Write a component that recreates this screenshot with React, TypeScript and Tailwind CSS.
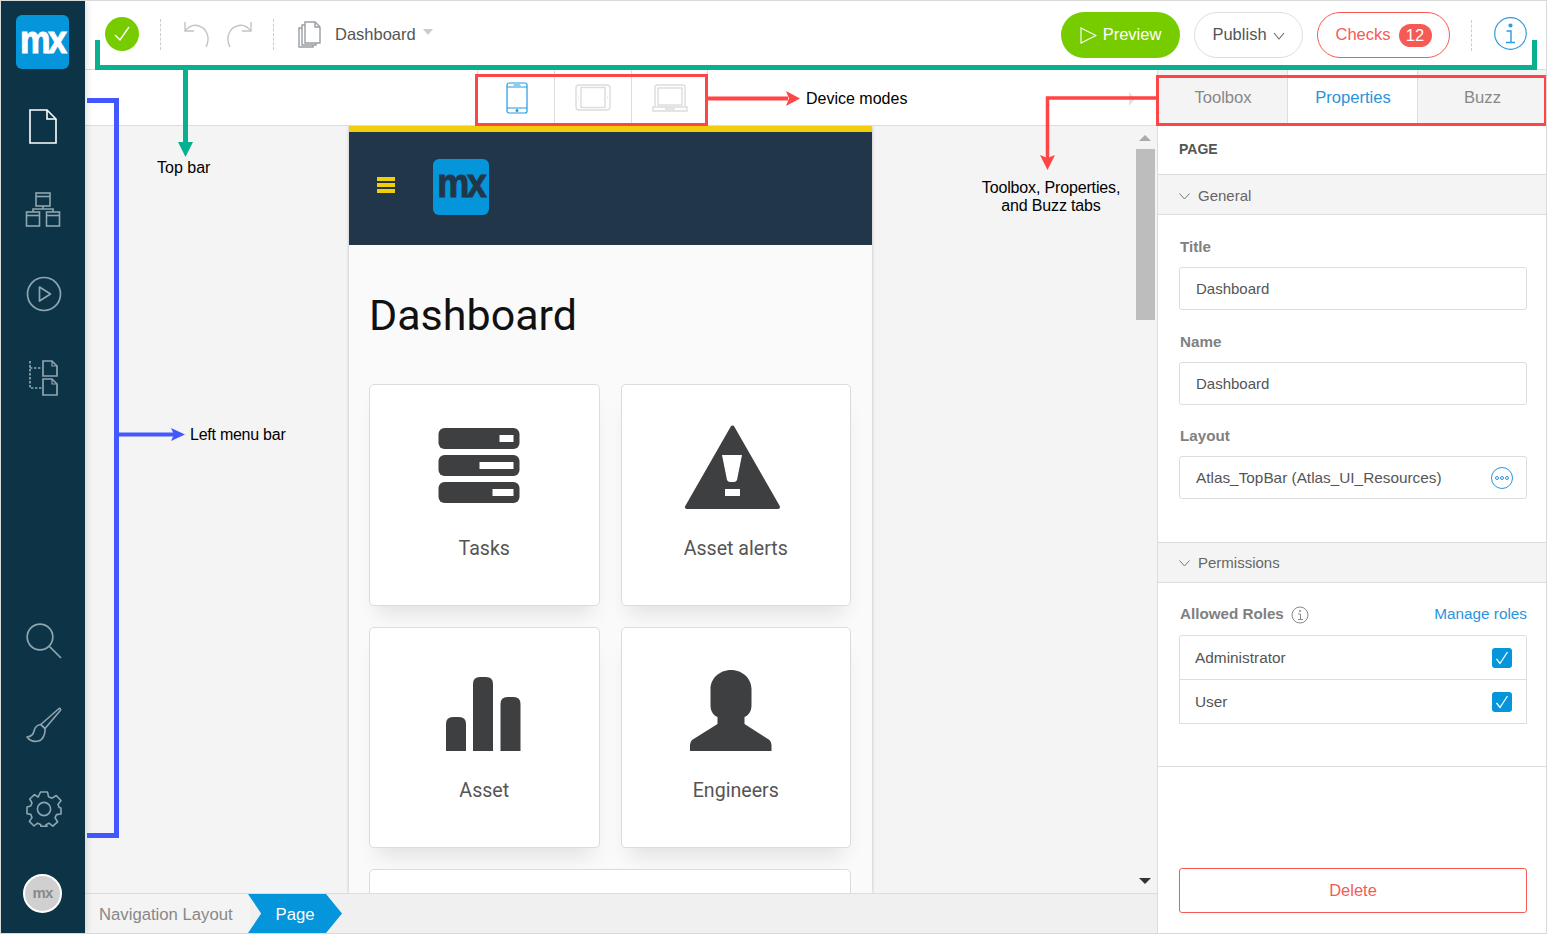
import React from "react";

const Logo = ({ box, text, color }: { box: string; text: string; color: string }) => (
  <div className={`${box} bg-[#0595db] flex items-center justify-center pb-[6px] pr-[1px] font-bold leading-none font-['Liberation_Sans',sans-serif]`}>
    <span className={`${text} ${color} inline-block tracking-[-3px] scale-x-[0.88]`}>mx</span>
  </div>
);

const Rail = ({ children, h = "h-[84px]" }: { children: React.ReactNode; h?: string }) => (
  <div className={`${h} flex items-center justify-center`}>{children}</div>
);

const S = "#8fa6b0";

const Sidebar = () => (
  <aside className="w-[84px] shrink-0 bg-[#0d3346] flex flex-col z-10 shadow-[2px_0_6px_rgba(0,0,0,0.12)]">
    <div className="h-[83px] pt-[14px] flex justify-center pr-[1px]">
      <Logo
        box="w-[53px] h-[54px] rounded-[6px]"
        text="text-[39px] [-webkit-text-stroke:1px_white]"
        color="text-white"
      />
    </div>
    <Rail>
      <svg width="28" height="35" viewBox="0 0 28 35" fill="none" stroke="#fff" strokeWidth="1.6">
        <path d="M1 1H18L27 10V34H1Z" />
        <path d="M18 1V10H27" />
      </svg>
    </Rail>
    <Rail>
      <svg className="mb-[2px]" width="36" height="35" viewBox="0 0 36 35" fill="none" stroke={S} strokeWidth="1.6">
        <rect x="11" y="1" width="14" height="13" />
        <path d="M11 4.500H25" />
        <path d="M18 14V17M8 20V17H28V20" />
        <rect x="1.500" y="20" width="13" height="14" />
        <path d="M1.500 23.500H14.500" />
        <rect x="21.500" y="20" width="13" height="14" />
        <path d="M21.500 23.500H34.500" />
      </svg>
    </Rail>
    <Rail>
      <svg className="ml-[1px]" width="36" height="36" viewBox="0 0 36 36" fill="none" stroke={S} strokeWidth="1.7">
        <circle cx="18" cy="18" r="16.5" />
        <path d="M13.500 11L24.500 18L13.500 25Z" strokeLinejoin="round" />
      </svg>
    </Rail>
    <Rail>
      <svg width="30" height="36" viewBox="0 0 30 36" fill="none" stroke={S} strokeWidth="1.7">
        <path d="M2 1V28H14M2 8H14" strokeDasharray="2.4 1.6" />
        <path d="M15 1H24L29 6V16H15Z" />
        <path d="M15 19H24L29 24V35H15Z" />
        <path d="M24 1V6H29M24 19V24H29" strokeWidth="1.2" />
      </svg>
    </Rail>
    <div className="flex-1" />
    <Rail>
      <svg className="ml-[1px]" width="36" height="36" viewBox="0 0 36 36" fill="none" stroke={S} strokeWidth="1.7">
        <circle cx="14" cy="14" r="12.8" />
        <path d="M23.500 23.500L35 35" />
      </svg>
    </Rail>
    <Rail>
      <svg className="ml-[1px]" width="36" height="36" viewBox="0 0 36 36" fill="none" stroke={S} strokeWidth="1.6" strokeLinejoin="round">
        <path d="M33 1.500C34 1 35 2 34.500 3.200L19 21.500L14.800 17.500Z" />
        <path d="M14.800 17.500C10.500 18 8.800 20.500 8 24C7.500 27 5 29.500 1 30C3.500 33.500 8 35 12.500 34C17 33 19.500 27 19 21.500Z" />
      </svg>
    </Rail>
    <Rail>
      <svg className="ml-[1px]" width="36" height="36" viewBox="-18 -18 36 36" fill="none" stroke={S} strokeWidth="1.6" strokeLinejoin="round">
        <path d="M-3.500 -17H3.500L4.500 -12.300L8 -10.800L12.200 -13.500L17 -8.500L14 -4.500L15.200 -1.500L17 -1V5L12.500 5.600L11 8.800L13.600 12.800L8.800 17.200L5 14.200L2 15.600L3 17.200H-3L-3.400 15.500L-6.500 14.200L-10 17L-14.600 12.400L-12 8.600L-13.200 5.400L-17 4.800V-2L-13.300 -3L-12 -6L-14.200 -10L-9.600 -14.400L-5.800 -12Z" />
        <circle cx="0" cy="0" r="6.600" />
      </svg>
    </Rail>
    <Rail h="h-[82px] pt-[3px]">
      <div className="mr-[1px] w-[39px] h-[39px] rounded-full bg-[#d0d0d0] border-2 border-white flex items-center justify-center pb-[2px] font-['Liberation_Sans',sans-serif] font-bold text-[15px] tracking-[-0.8px] text-[#8a8a8a] leading-none">
        mx
      </div>
    </Rail>
  </aside>
);

const Dash = () => <div className="w-0 h-[31px] border-l border-dashed border-[#ccc]" />;

const TopBar = () => (
  <header className="h-[69px] shrink-0 border-b border-[#ddd] bg-white flex items-center text-[16.5px]">
    <div className="flex items-center mb-[2px]">
      <div className="ml-[20px] w-[34px] h-[34px] rounded-full bg-[#77cc00] flex items-center justify-center">
        <svg width="18" height="18" viewBox="0 0 18 18" fill="none" stroke="#fff" strokeWidth="1.4">
          <path d="M2 10L7 15L16 2" />
        </svg>
      </div>
      <div className="ml-[21px]"><Dash /></div>
      <svg className="ml-[22px]" width="28" height="28" viewBox="0 0 28 28" fill="none" stroke="#c4c4c4" strokeWidth="1.4">
        <path d="M2 2V11H11" />
        <path d="M2 11C6 6 11 4 16 6C23 8 28 17 23 27" />
      </svg>
      <svg className="ml-[14px]" width="28" height="28" viewBox="0 0 28 28" fill="none" stroke="#c4c4c4" strokeWidth="1.4">
        <path d="M26 2V11H17" />
        <path d="M26 11C22 6 17 4 12 6C5 8 0 17 5 27" />
      </svg>
      <div className="ml-[20px]"><Dash /></div>
      <svg className="ml-[24px]" width="23" height="27" viewBox="0 0 23 27" fill="none" stroke="#9a9ea3" strokeWidth="1.4">
        <path d="M7 1H17L22 6V22H7Z" />
        <path d="M17 1V6H22" />
        <path d="M7 4H4V24H18V22" />
        <path d="M4 7H1V26H15V24" />
      </svg>
      <span className="ml-[14px] text-[#555]">Dashboard</span>
      <span className="ml-[7px] mb-[4px] w-0 h-0 border-x-[5.5px] border-x-transparent border-t-[6px] border-t-[#ccc]" />
    </div>
    <div className="flex-1" />
    <button className="w-[119px] h-[46px] rounded-full bg-[#77cc00] text-white flex items-center justify-center gap-[6px] pb-[2px]">
      <svg className="mt-[2px]" width="17" height="17" viewBox="0 0 17 17" fill="none" stroke="#fff" strokeWidth="1.1">
        <path d="M1 1L16 8.500L1 16Z" />
      </svg>
      Preview
    </button>
    <button className="ml-[14px] w-[109px] h-[46px] rounded-full border border-[#ddd] text-[#555] flex items-center justify-center gap-[6px] pb-[2px]">
      Publish
      <svg className="mt-[3px]" width="12" height="8" viewBox="0 0 12 8" fill="none" stroke="#666" strokeWidth="1.1">
        <path d="M1 1L6 7L11 1" />
      </svg>
    </button>
    <button className="ml-[14px] w-[133px] h-[46px] rounded-full border border-[#f55a55] text-[#f55a55] flex items-center justify-center gap-[8px]">
      <span className="pb-[2px]">Checks</span>
      <span className="w-[33px] h-[23px] rounded-[12px] bg-[#f55a55] text-white flex items-center justify-center">12</span>
    </button>
    <div className="ml-[21px]"><Dash /></div>
    <svg className="ml-[22px] mr-[19px] mb-[4px]" width="33" height="33" viewBox="0 0 33 33" fill="none" stroke="#2a9be2" strokeWidth="1.2">
      <circle cx="16.500" cy="16.500" r="15.800" />
      <circle cx="16.500" cy="8.500" r="1.500" fill="#2a9be2" />
      <path d="M12.500 14H17V25M12 25.500H21" strokeWidth="1.4" />
    </svg>
  </header>
);

const DeviceCell = ({ children, last }: { children: React.ReactNode; last?: boolean }) => (
  <div className={`w-[77px] h-full flex items-center justify-center border-l border-[#ddd] ${last ? "border-r" : ""}`}>{children}</div>
);

const DeviceBar = () => (
  <div className="h-[56px] shrink-0 bg-white border-b border-[#ddd] flex pl-[392px] relative">
    <DeviceCell>
      <svg className="ml-[1px]" width="22" height="32" viewBox="0 0 22 32" fill="none" stroke="#1f9be3" strokeWidth="1.2">
        <rect x="1" y="1" width="20" height="30" rx="2" />
        <path d="M1 5H21M1 26H21M7.500 3H14.500" />
        <circle cx="11" cy="28.500" r="0.9" fill="#1f9be3" />
      </svg>
    </DeviceCell>
    <DeviceCell>
      <svg width="36" height="27" viewBox="0 0 36 27" fill="none" stroke="#dcdcdc" strokeWidth="1.4">
        <rect x="1" y="1" width="34" height="25" rx="3" />
        <rect x="6" y="3.500" width="24" height="20" />
        <path d="M3 13.500H4M32 13.500H33" />
      </svg>
    </DeviceCell>
    <DeviceCell last>
      <svg width="36" height="28" viewBox="0 0 36 28" fill="none" stroke="#dcdcdc" strokeWidth="1.4">
        <path d="M3 22V3A2 2 0 0 1 5 1H31A2 2 0 0 1 33 3V22" />
        <rect x="6" y="4" width="24" height="17" />
        <path d="M1 23H35V27H1Z" />
        <path d="M14 23V25H22V23" />
      </svg>
    </DeviceCell>
    <span className="absolute right-[22px] top-[22px] w-0 h-0 border-y-[7px] border-y-transparent border-l-[6px] border-l-[#e0e0e0]" />
  </div>
);

const Card = ({ label, h, lm, children }: { label: string; h: string; lm: string; children: React.ReactNode }) => (
  <div className={`${h} bg-white border border-[#dcdcdc] rounded-[5px] shadow-[0_16px_20px_-8px_rgba(0,0,0,0.1)] flex flex-col`}>
    <svg className="mt-[40px] block" width="228" height="88" viewBox="0 0 228 88" fill="#3e3f41">
      {children}
    </svg>
    <div className={`${lm} text-center text-[19.6px] font-normal text-[#555] leading-[30px]`}>{label}</div>
  </div>
);

const Canvas = () => (
  <div className="flex-1 min-h-0 flex bg-[#f4f4f4] overflow-hidden">
    <div className="flex-1 min-w-0 pl-[264px]">
      <div className="w-[523px] h-full bg-[#fafafa] shadow-[0_0_3px_rgba(0,0,0,0.25)] font-['Roboto',sans-serif]">
        <div className="h-[119px] bg-[#213649] border-t-[6px] border-[#f0cf0a] flex items-center">
          <div className="ml-[28px] mb-[7px] w-[18px] flex flex-col gap-[2px]">
            <div className="h-[4px] bg-[#f0cf0a]" />
            <div className="h-[4px] bg-[#f0cf0a]" />
            <div className="h-[4px] bg-[#f0cf0a]" />
          </div>
          <div className="ml-[38px] mb-[4px]">
            <Logo
              box="w-[56px] h-[56px] rounded-[6px]"
              text="text-[41px] [-webkit-text-stroke:1px_#213649]"
              color="text-[#213649]"
            />
          </div>
        </div>
        <h1 className="mt-[42px] ml-[20px] text-[43px] leading-[56px] font-normal text-[#111]">Dashboard</h1>
        <div className="mt-[41px] ml-[20px] w-[482px] grid grid-cols-2 gap-[21px]">
          <Card label="Tasks" h="h-[222px]" lm="mt-[21px]">
            <rect x="68.500" y="3" width="81" height="21" rx="6" />
            <rect x="68.500" y="30" width="81" height="21" rx="6" />
            <rect x="68.500" y="57" width="81" height="21" rx="6" />
            <rect x="129.500" y="10" width="14" height="7" fill="#fff" />
            <rect x="109.500" y="37" width="34" height="7" fill="#fff" />
            <rect x="122.500" y="64" width="21" height="7" fill="#fff" />
          </Card>
          <Card label="Asset alerts" h="h-[222px]" lm="mt-[21px]">
            <path d="M110.500 2.500L65 82H156Z" stroke="#3e3f41" strokeWidth="4" strokeLinejoin="round" />
            <path d="M100 30H120L115 55Q114 57 112 57H108Q106 57 105 55Z" fill="#fff" />
            <rect x="103" y="64" width="15" height="7" fill="#fff" />
          </Card>
          <Card label="Asset" h="h-[221px]" lm="mt-[20px]">
            <path d="M76 83V56Q76 49 83 49H89Q96 49 96 56V83Z" />
            <path d="M103 83V16Q103 9 110 9H116Q123 9 123 16V83Z" />
            <path d="M130.500 83V36Q130.500 29 137.500 29H143.500Q150.500 29 150.500 36V83Z" />
          </Card>
          <Card label="Engineers" h="h-[221px]" lm="mt-[20px]">
            <path d="M109 2C97 2 88.500 11 88.500 21V37C88.500 43 91 47 95.500 49V56L70 72Q68 74 68 77V83H149.500V77Q149.500 74 147.500 72L122.500 56V49C127 47 129.500 43 129.500 37V21C129.500 11 121 2 109 2Z" />
          </Card>
          <div className="col-span-2 h-[100px] bg-white border border-[#dcdcdc] rounded-[5px]" />
        </div>
      </div>
    </div>
    <div className="w-[22px] shrink-0 flex flex-col relative">
      <span className="mt-[9px] ml-[4px] w-0 h-0 border-x-[6px] border-x-transparent border-b-[6px] border-b-[#aaa]" />
      <div className="mt-[8px] ml-[1px] w-[19px] h-[171px] bg-[#bdbdbd]" />
      <div className="flex-1" />
      <span className="mb-[9px] ml-[4px] w-0 h-0 border-x-[6px] border-x-transparent border-t-[6px] border-t-[#333]" />
    </div>
  </div>
);

const Breadcrumb = () => (
  <div className="h-[40px] shrink-0 bg-[#f0f0f0] border-t border-[#ddd] flex items-center text-[16.7px]">
    <div className="bg-[#f4f4f4] h-full flex items-center pl-[14px] pt-[2px] w-[165px] text-[#888]">Navigation Layout</div>
    <div className="w-[94px] h-full ml-[-2px] pt-[2px] bg-[#0595db] text-white flex items-center justify-center [clip-path:polygon(0_0,83%_0,100%_50%,83%_100%,0_100%,14%_50%)]">
      Page
    </div>
  </div>
);

const Tab = ({ label, active, w }: { label: string; active?: boolean; w: string }) => (
  <div
    className={`${w} flex items-center justify-center pl-[1px] pt-[1px] text-[16.6px] border-r border-[#ddd] last:border-r-0 ${
      active ? "bg-white text-[#2a93dd]" : "bg-[#f4f4f4] text-[#888]"
    }`}
  >
    {label}
  </div>
);

const Section = ({ label, pt }: { label: string; pt: string }) => (
  <div className={`${pt} h-[41px] bg-[#f4f4f4] border-y border-[#ddd] flex items-center pl-[21px] gap-[8px] text-[15px] text-[#666]`}>
    <svg width="11" height="7" viewBox="0 0 11 7" fill="none" stroke="#777" strokeWidth="1">
      <path d="M0.500 0.500L5.500 6L10.500 0.500" />
    </svg>
    {label}
  </div>
);

const Field = ({ label, value, dots, size }: { label: string; value: string; dots?: boolean; size: string }) => (
  <div className="ml-[21px] mr-[19px]">
    <div className="text-[15.2px] font-bold text-[#808080] leading-[20px] pl-[1px] pt-[1px]">{label}</div>
    <div className={`${size} mt-[10px] h-[43px] rounded-[3px] border border-[#ddd] flex items-center justify-between pl-[16px] pr-[13px] pt-[1px] text-[#555]`}>
      <span>{value}</span>
      {dots && (
        <svg width="22" height="22" viewBox="0 0 22 22" fill="none" stroke="#2a93dd" strokeWidth="1">
          <circle cx="11" cy="11" r="10.500" />
          <circle cx="6" cy="11" r="1.500" />
          <circle cx="11" cy="11" r="1.500" />
          <circle cx="16" cy="11" r="1.500" />
        </svg>
      )}
    </div>
  </div>
);

const Role = ({ label, top }: { label: string; top?: boolean }) => (
  <div className={`flex items-center justify-between pl-[15px] pr-[14px] text-[15.4px] text-[#555] ${top ? "h-[44px] border-b border-[#ddd]" : "h-[43px]"}`}>
    <span className="pt-[1px]">{label}</span>
    <span className="w-[20px] h-[20px] rounded-[3px] bg-[#0595db] flex items-center justify-center">
      <svg width="14" height="14" viewBox="0 0 14 14" fill="none" stroke="#fff" strokeWidth="1.3">
        <path d="M1.500 8L5 12.500L12.500 1" />
      </svg>
    </span>
  </div>
);

const Panel = () => (
  <aside className="w-[389px] shrink-0 border-l border-[#ddd] bg-white flex flex-col">
    <div className="h-[56px] shrink-0 border-b border-[#ddd] flex">
      <Tab label="Toolbox" w="w-[130px]" />
      <Tab label="Properties" w="w-[130px]" active />
      <Tab label="Buzz" w="flex-1" />
    </div>
    <div className="h-[48px] shrink-0 pl-[21px] pb-[2px] flex items-center text-[14px] font-bold text-[#555]">PAGE</div>
    <Section label="General" pt="pt-[3px]" />
    <div className="pt-[21px] flex flex-col gap-[21px]">
      <Field label="Title" value="Dashboard" size="text-[15px]" />
      <Field label="Name" value="Dashboard" size="text-[15px]" />
      <div className="mt-[-1px]"><Field label="Layout" value="Atlas_TopBar (Atlas_UI_Resources)" size="text-[15.35px]" dots /></div>
    </div>
    <div className="mt-[43px]"><Section label="Permissions" pt="pt-[1px]" /></div>
    <div className="ml-[21px] mr-[19px] mt-[21px] pt-[1px] flex items-center justify-between h-[20px]">
      <div className="flex items-center gap-[7px] pl-[1px] text-[15.2px] font-bold text-[#808080]">
        Allowed Roles
        <svg width="18" height="18" viewBox="0 0 18 18" fill="none" stroke="#8a8a8a" strokeWidth="1">
          <circle cx="9" cy="9" r="8" />
          <circle cx="9" cy="5" r="0.6" fill="#8a8a8a" />
          <path d="M7 8H9.500V13M7 13.500H12" />
        </svg>
      </div>
      <span className="text-[15.3px] text-[#2a93dd]">Manage roles</span>
    </div>
    <div className="ml-[21px] mr-[19px] mt-[11px] border border-[#ddd] rounded-t-[3px]">
      <Role label="Administrator" top />
      <Role label="User" />
    </div>
    <div className="mt-[42px] border-t border-[#ddd]" />
    <div className="flex-1" />
    <button className="ml-[21px] mr-[19px] mb-[20px] h-[45px] rounded-[3px] border border-[#f55a55] text-[#f55a55] text-[16.5px]">Delete</button>
  </aside>
);

const Note = ({ className, children }: { className: string; children: React.ReactNode }) => (
  <div className={`absolute text-[16px] leading-[18px] text-black z-30 ${className}`}>{children}</div>
);

const Annotations = () => (
  <>
    <svg className="absolute left-[-1px] top-[-1px] z-20 pointer-events-none" width="1547" height="934" viewBox="0 0 1547 934" fill="none">
      <path d="M97.500 40V67.500H1534.500V40" stroke="#07b08e" strokeWidth="5" />
      <path d="M185.500 68V143" stroke="#07b08e" strokeWidth="5" />
      <path d="M178 142H193L185.500 157Z" fill="#07b08e" />
      <path d="M87 100.500H116.500V835.500H87" stroke="#4357ff" strokeWidth="5" />
      <path d="M119 434.500H174" stroke="#4357ff" strokeWidth="4" />
      <path d="M171 428L185 434.500L171 441L174 434.500Z" fill="#4357ff" />
      <rect x="476.500" y="75.500" width="230" height="49" stroke="#ff4545" strokeWidth="3" />
      <path d="M707 98.500H788" stroke="#ff4545" strokeWidth="4" />
      <path d="M786 91L800 98.500L786 106L789 98.500Z" fill="#ff4545" />
      <rect x="1157.500" y="76.500" width="388" height="48" stroke="#ff4545" strokeWidth="3" />
      <path d="M1157 98H1047.500V158" stroke="#ff4545" strokeWidth="3.500" />
      <path d="M1040 155L1047.500 158L1055 155L1047.500 170Z" fill="#ff4545" />
    </svg>
    <Note className="left-[156px] top-[158px]">Top bar</Note>
    <Note className="left-[189px] top-[425px] tracking-[-0.25px]">Left menu bar</Note>
    <Note className="left-[805px] top-[89px]">Device modes</Note>
    <Note className="left-[950px] top-[178px] w-[200px] text-center tracking-[-0.15px]">
      Toolbox, Properties,
      <br />
      and Buzz tabs
    </Note>
  </>
);

export default function App() {
  return (
    <div className="relative w-[1547px] h-[934px] overflow-hidden border border-[#d9d9d9] bg-white flex font-['Liberation_Sans',Arial,sans-serif]">
      <Sidebar />
      <div className="flex-1 min-w-0 flex flex-col">
        <TopBar />
        <div className="flex-1 min-h-0 flex">
          <div className="flex-1 min-w-0 flex flex-col">
            <DeviceBar />
            <Canvas />
            <Breadcrumb />
          </div>
          <Panel />
        </div>
      </div>
      <Annotations />
    </div>
  );
}
